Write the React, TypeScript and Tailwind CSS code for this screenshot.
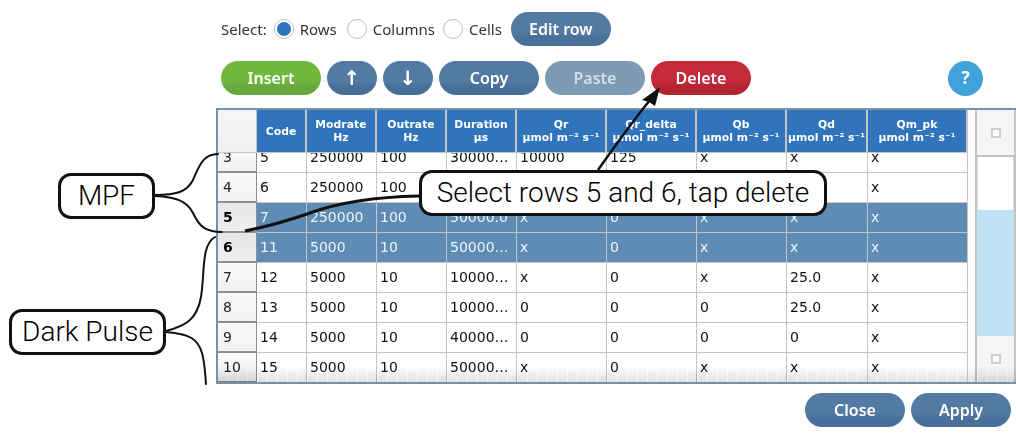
import React from "react";

const COLS = "grid grid-cols-[39px_50px_70px_70px_70px_90px_90px_90px_81px_100px]";
const UNIT = "µmol m⁻² s⁻¹";

const headers: [string, string][] = [
  ["Code", ""],
  ["Modrate", "Hz"],
  ["Outrate", "Hz"],
  ["Duration", "µs"],
  ["Qr", UNIT],
  ["Qr_delta", UNIT],
  ["Qb", UNIT],
  ["Qd", UNIT],
  ["Qm_pk", UNIT],
];

const rows: { n: number; sel?: boolean; c: string[] }[] = [
  { n: 3, c: ["5", "250000", "100", "30000…", "10000", "125", "x", "x", "x"] },
  { n: 4, c: ["6", "250000", "100", "", "", "", "", "", "x"] },
  { n: 5, sel: true, c: ["7", "250000", "100", "50000.0", "x", "0", "x", "x", "x"] },
  { n: 6, sel: true, c: ["11", "5000", "10", "50000…", "x", "0", "x", "x", "x"] },
  { n: 7, c: ["12", "5000", "10", "10000…", "x", "0", "x", "25.0", "x"] },
  { n: 8, c: ["13", "5000", "10", "10000…", "0", "0", "0", "25.0", "x"] },
  { n: 9, c: ["14", "5000", "10", "40000…", "0", "0", "0", "0", "x"] },
  { n: 10, c: ["15", "5000", "10", "50000…", "x", "0", "x", "x", "x"] },
];

const BLUE = "bg-[linear-gradient(#527aa2_0%,#527aa2_60%,#49709a_75%,#49709a_100%)] text-white";

function Btn({ label, cls, w = "w-[100px]", size = "text-[16px]" }: { label: string; cls?: string; w?: string; size?: string }) {
  return (
    <div
      className={`${w} ${size} h-[34px] shrink-0 rounded-full flex items-center justify-center font-semibold ${cls ?? BLUE}`}
    >
      {label}
    </div>
  );
}

function Radio({ label, on }: { label: string; on?: boolean }) {
  return (
    <div className="flex items-center gap-[6px]">
      <div className="w-[20px] h-[20px] rounded-full border border-[#bdbdbd] bg-white flex items-center justify-center">
        {on && <div className="w-[14px] h-[14px] rounded-full bg-[#2f74bc]" />}
      </div>
      <span>{label}</span>
    </div>
  );
}

function ScrollBtn({ h }: { h: string }) {
  return (
    <div className={`${h} bg-[#f5f5f5] flex items-center justify-center shrink-0`}>
      <div className="w-[10px] h-[10px] border-2 border-[#cfcfcf] bg-white" />
    </div>
  );
}

function Callout({ text, cls }: { text: string; cls: string }) {
  return (
    <div
      className={`absolute h-[46px] bg-white border-[3px] border-[#111] rounded-[13px] flex items-center justify-center text-[28px] text-black font-light whitespace-nowrap [font-family:Roboto,'Liberation_Sans',sans-serif] ${cls}`}
    >
      {text}
    </div>
  );
}

export default function App() {
  return (
    <div className="relative w-[1016px] h-[435px] overflow-hidden bg-white text-[#333] [font-family:'Noto_Sans',sans-serif]">
      <div className="pt-[12px] pl-[221px]">
        <div className="h-[34px] flex items-center text-[15px]">
          <span className="mr-[7px]">Select:</span>
          <Radio label="Rows" on />
          <div className="w-[10px]" />
          <Radio label="Columns" />
          <div className="w-[8px]" />
          <Radio label="Cells" />
          <div className="w-[9px]" />
          <Btn label="Edit row" />
        </div>

        <div className="mt-[15px] h-[34px] flex items-center gap-[6px]">
          <Btn
            label="Insert"
            cls="bg-[linear-gradient(#73b83e_0%,#73b83e_55%,#68a83c_75%,#68a83c_100%)] text-white"
          />
          <Btn label="↑" w="w-[50px]" size="text-[20px] [font-family:'DejaVu_Sans',sans-serif]" />
          <Btn label="↓" w="w-[50px]" size="text-[20px] [font-family:'DejaVu_Sans',sans-serif]" />
          <Btn label="Copy" />
          <Btn label="Paste" cls="bg-[#7d9bb5] text-[#d5dee6]" />
          <Btn
            label="Delete"
            cls="bg-[linear-gradient(#c42a3a_0%,#c42a3a_60%,#b32433_75%,#b32433_100%)] text-white"
          />
          <div className="ml-[191px] w-[35px] h-[35px] rounded-full bg-[#42a2da] text-white flex items-center justify-center text-[17px] font-bold">
            ?
          </div>
        </div>
      </div>

      <div className="relative ml-[216px] mt-[13px] h-[276px] border-2 border-r-0 border-[#7492ad] flex bg-white [font-family:'DejaVu_Sans',sans-serif]">
        <div className="w-[750px] shrink-0 flex flex-col">
          <div className={`${COLS} h-[43px] shrink-0 border-b border-[#c4c4c4]`}>
            <div className="bg-[linear-gradient(#f6f6f6,#f0f0f0)] border-r border-[#c4c4c4]" />
            {headers.map(([a, b]) => (
              <div
                key={a}
                className="bg-[#3074bc] border-r-2 border-[#c4c4c4] text-white text-[10.8px] font-bold leading-[13px] tracking-[0.05px] flex flex-col items-center justify-center whitespace-nowrap overflow-hidden"
              >
                <span>{a}</span>
                {b && <span>{b}</span>}
              </div>
            ))}
          </div>
          <div className="h-[229px] overflow-hidden">
            <div className="-mt-[10px]">
              {rows.map((r) => (
                <div key={r.n} className={`${COLS} h-[30px] text-[14px]`}>
                  <div
                    className={`border-b-2 border-r border-[#8f8f8f] flex items-center pl-[5px] text-[#222] ${
                      r.sel
                        ? "font-bold text-black bg-[linear-gradient(#e6e6e6,#f0eeee)]"
                        : "bg-[linear-gradient(#fbfafb,#f1f1f1)]"
                    }`}
                  >
                    {r.n}
                  </div>
                  {r.c.map((v, i) => (
                    <div
                      key={i}
                      className={`border-b border-r border-[#c4c4c4] flex items-center pl-[3px] whitespace-nowrap overflow-hidden ${
                        r.sel ? "bg-[#5f8cb4] text-[#eef3f7]" : "bg-white text-[#111]"
                      }`}
                    >
                      {v}
                    </div>
                  ))}
                </div>
              ))}
            </div>
          </div>
        </div>

        <div className="ml-[7px] w-[41px] shrink-0 border-x-2 border-[#c4c4c4] flex flex-col">
          <ScrollBtn h="h-[47px] border-b-2 border-[#c4c4c4]" />
          <div className="h-[53px] shrink-0 border-x border-dotted border-[#bdbdbd] bg-white" />
          <div className="h-[126px] shrink-0 bg-[#bfe2f5]" />
          <ScrollBtn h="flex-1" />
        </div>

        <div className="absolute left-0 right-0 bottom-0 h-[16px] pointer-events-none mix-blend-multiply bg-[repeating-linear-gradient(90deg,transparent_0px,transparent_9px,rgba(255,255,255,0.7)_9px,rgba(255,255,255,0.7)_10px),linear-gradient(#ffffff,#dde1dd)]" />
      </div>

      <div className="mt-[9px] flex justify-end gap-[6px] pr-[5px]">
        <Btn label="Close" />
        <Btn label="Apply" />
      </div>

      <svg className="absolute left-0 top-0 pointer-events-none" width="1016" height="435" viewBox="0 0 1016 435" fill="none">
        <g stroke="#111" strokeWidth="2" strokeLinecap="round">
          <path d="M155 195 C176 195 187 192 193 180 C199 166 203 154 218 154" />
          <path d="M155 196 C176 197 187 201 193 213 C199 226 205 232 222 232" />
          <path d="M166 331 C185 326 197 320 201 297 C205 272 201 245 215 237" />
          <path d="M166 332 C190 334 198 339 202 353 C205 364 205 372 206 384" />
        </g>
        <path d="M419 196 C375 197 340 202 310 213 C290 220 270 226 245 231" stroke="#111" strokeWidth="3" />
        <path d="M598 170 C615 146 632 122 650 100" stroke="#111" strokeWidth="2.5" />
        <path d="M660 87 L642 100 L649 102 L655 106 Z" fill="#111" />
      </svg>

      <Callout text="MPF" cls="left-[58px] top-[173px] w-[97px]" />
      <Callout text="Dark Pulse" cls="left-[9px] top-[309px] w-[157px]" />
      <Callout text="Select rows 5 and 6, tap delete" cls="left-[419px] top-[170px] w-[408px]" />
    </div>
  );
}
